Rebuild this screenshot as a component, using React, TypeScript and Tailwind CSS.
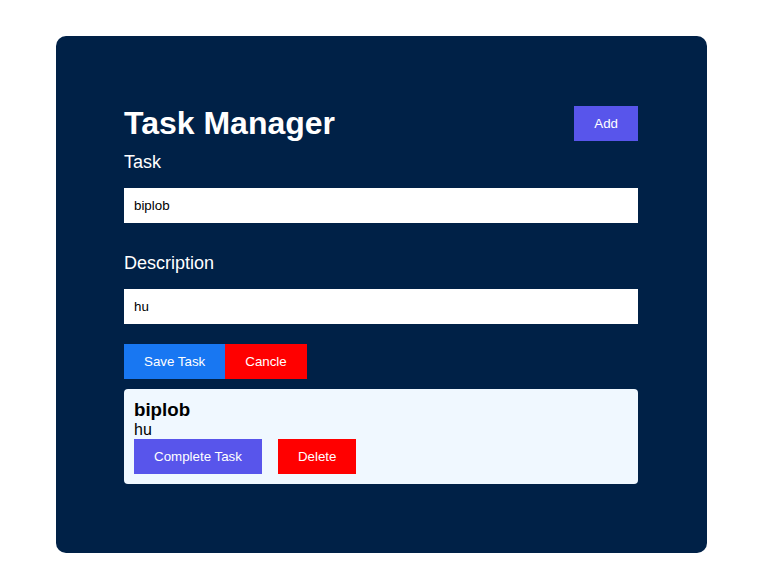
export default function App() {
  return (
    <div className="min-h-[585px] bg-white pt-9 font-['Liberation_Sans',Arial,sans-serif]">
      <div className="ml-[56px] w-[651px] rounded-[10px] bg-[#002147] pl-[68px] pr-[69px] pt-[69px] pb-[69px]">
        {/* Header */}
        <div className="flex items-center justify-between">
          <h1 className="text-[32px] font-bold leading-[37px] text-white">Task Manager</h1>
          <button className="bg-[#5855eb] px-5 py-[10px] text-[13.333px] leading-[15px] text-white">
            Add
          </button>
        </div>

        {/* Form */}
        <label className="mt-[10px] block text-[18px] leading-[21px] text-white">Task</label>
        <input
          className="mt-[15px] block h-[35px] w-full bg-white px-[10px] text-[13.333px] text-black outline-none"
          defaultValue="biplob"
        />
        <label className="mt-[30px] block text-[18px] leading-[21px] text-white">Description</label>
        <input
          className="mt-[15px] block h-[35px] w-full bg-white px-[10px] text-[13.333px] text-black outline-none"
          defaultValue="hu"
        />

        <div className="mt-5 flex">
          <button className="bg-[#1877f2] px-5 py-[10px] text-[13.333px] leading-[15px] text-white">
            Save Task
          </button>
          <button className="bg-[#ff0000] px-5 py-[10px] text-[13.333px] leading-[15px] text-white">
            Cancle
          </button>
        </div>

        {/* Task list */}
        <div className="mt-[10px] rounded-[4px] bg-[#f0f8ff] px-[10px] pt-[10px] pb-[10px]">
          <h3 className="text-[18.72px] font-bold leading-[21.5px] text-black">biplob</h3>
          <p className="text-[16px] leading-[18.5px] text-black">hu</p>
          <div className="flex gap-4">
            <button className="bg-[#5855eb] px-5 py-[10px] text-[13.333px] leading-[15px] text-white">
              Complete Task
            </button>
            <button className="bg-[#ff0000] px-5 py-[10px] text-[13.333px] leading-[15px] text-white">
              Delete
            </button>
          </div>
        </div>
      </div>
    </div>
  );
}
